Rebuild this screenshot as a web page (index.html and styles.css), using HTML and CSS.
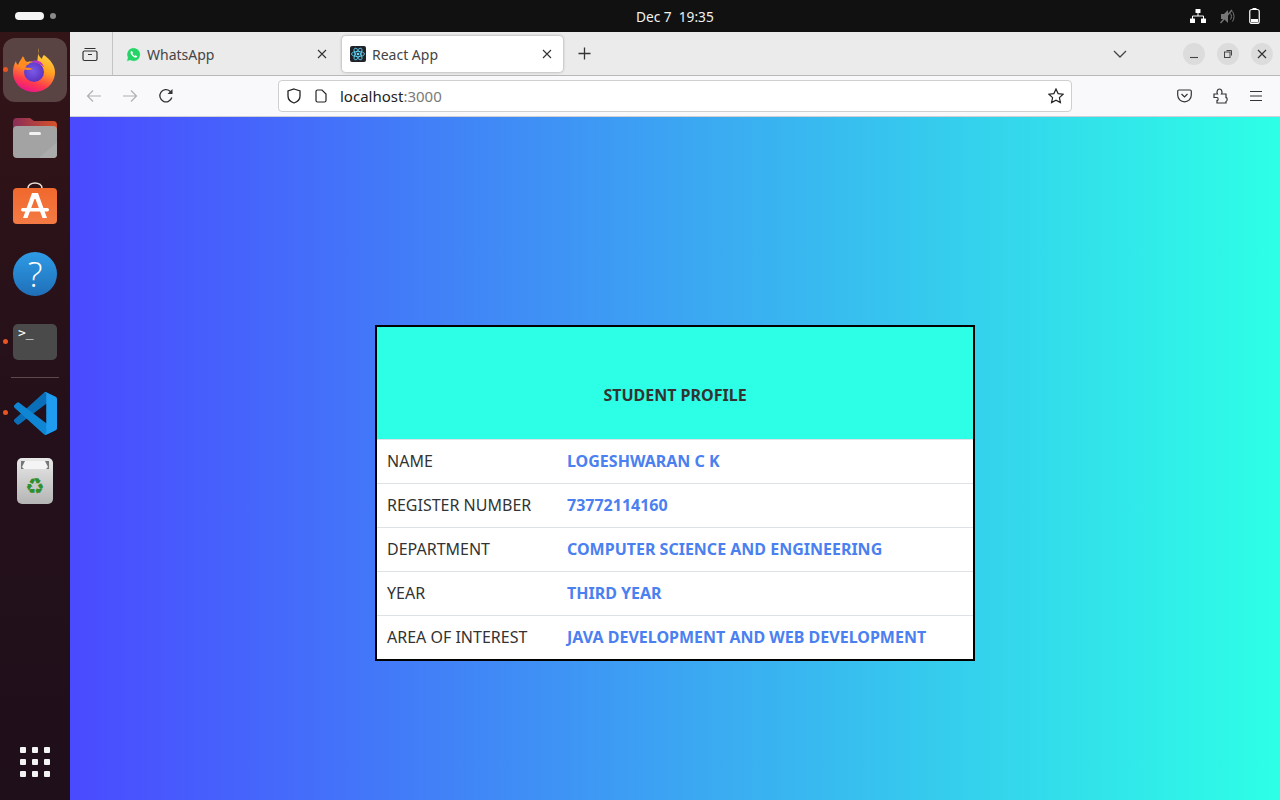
FILE: index.html
```html
<!DOCTYPE html>
<html lang="en">
<head>
    <meta charset="UTF-8">
    <meta name="viewport" content="width=device-width, initial-scale=1.0">
    <title>React App</title>
    <link rel="stylesheet" href="styles.css">
</head>
<body>
    <!-- top bar -->
    <header class="topbar">
        <div class="workspaces"><span class="ws-pill"></span><span class="ws-dot"></span></div>
        <div class="clock">Dec 7&nbsp;&nbsp;19:35</div>
        <div class="tray">
            <svg width="16" height="14" viewBox="0 0 16 14"><rect x="5.5" y="0" width="5" height="4" rx="0.5" fill="#fff"/><path d="M8 4v3M2.5 10V7h11v3" fill="none" stroke="#fff"/><rect x="0" y="9.5" width="5" height="4.5" rx="0.5" fill="#fff"/><rect x="11" y="9.5" width="5" height="4.5" rx="0.5" fill="#fff"/></svg>
            <svg width="15" height="15" viewBox="0 0 15 15"><path d="M1 5h3l4-4v13l-4-4H1z" fill="#777"/><path d="M10.5 4.5c1.2 1.6 1.2 4.400 0 6M12.500 2.500c2 2.600 2 7.400 0 10" fill="none" stroke="#777"/><path d="M0.500 14L12 1" stroke="#777" stroke-width="1.400"/></svg>
            <svg width="11" height="16" viewBox="0 0 11 16"><rect x="3.500" y="0" width="4" height="2" fill="#fff"/><rect x="0.750" y="1.500" width="9.500" height="14" rx="2" fill="none" stroke="#fff" stroke-width="1.200"/><rect x="2" y="11" width="7" height="3.500" fill="#fff"/></svg>
        </div>
    </header>

    <div class="desktop">
        <!-- dock -->
        <nav class="dock">
            <div class="dock-item dock-active">
                <span class="run-dot"></span>
                <svg width="44" height="44" viewBox="0 0 44 44">
                    <defs>
                        <linearGradient id="fx" x1="0.7" y1="0" x2="0.35" y2="1"><stop offset="0" stop-color="#ffe04a"/><stop offset="0.45" stop-color="#ffa022"/><stop offset="0.78" stop-color="#ff3a4e"/><stop offset="1" stop-color="#e8148c"/></linearGradient>
                        <radialGradient id="fxb" cx="0.45" cy="0.45" r="0.6"><stop offset="0" stop-color="#7a5be6"/><stop offset="1" stop-color="#5a2fc0"/></radialGradient>
                    </defs>
                    <path d="M26 0c-2 4-1 8 3 11 0-2 1-3 2-4 7 5 11 11 11 17 0 11-9 20-21 20C9 44 0 35 0 24c0-4 1-8 3-11 0 2 1 3 2 4 1-3 3-6 6-8 0 2 1 4 3 5 3-1 7-1 10 0 1-4 1-10 2-14z" fill="url(#fx)"/>
                    <circle cx="21" cy="24" r="10" fill="url(#fxb)"/>
                    <path d="M10 8c1 4 3 7 7 8-3 1-5 1-7 3 3 1 6 0 10 2-4 2-10 1-14-2 0-4 2-8 4-11z" fill="#ff8a1f"/>
                    <path d="M17 14c5-3 12-2 14 5-3-3-8-5-14-5z" fill="#b833c8"/>
                </svg>
            </div>
            <div class="dock-item">
                <svg width="44" height="40" viewBox="0 0 44 40">
                    <defs><linearGradient id="fold" x1="0" y1="0" x2="1" y2="0"><stop offset="0" stop-color="#8a2d58"/><stop offset="1" stop-color="#d8522a"/></linearGradient></defs>
                    <path d="M0 4a4 4 0 0 1 4-4h13l4 3h19a4 4 0 0 1 4 4v10H0z" fill="url(#fold)"/>
                    <rect y="8" width="44" height="32" rx="4" fill="#a3a3a3"/>
                    <path d="M44 24v12a4 4 0 0 1-4 4H26z" fill="#ababab"/>
                    <rect x="16" y="14" width="12" height="3" rx="1.500" fill="#f2f2f2"/>
                </svg>
            </div>
            <div class="dock-item">
                <svg width="44" height="48" viewBox="0 0 44 48">
                    <defs><linearGradient id="bag" x1="0" y1="0" x2="0" y2="1"><stop offset="0" stop-color="#f0682e"/><stop offset="1" stop-color="#f47a44"/></linearGradient></defs>
                    <path d="M15 8V6a7 5 0 0 1 14 0v2" fill="none" stroke="#eadfd2" stroke-width="1.600"/>
                    <rect y="6" width="44" height="36" rx="4" fill="url(#bag)"/>
                    <path d="M19 11h6l9 25h-4.500l-7-19h-1l-7 19H10z" fill="#fff"/>
                    <rect x="8" y="26" width="28" height="3.500" rx="1.750" fill="#fff"/>
                </svg>
            </div>
            <div class="dock-item">
                <div class="help-icon">?</div>
            </div>
            <div class="dock-item">
                <span class="run-dot"></span>
                <div class="term-icon"><span class="term-prompt">&gt;_</span></div>
            </div>
            <div class="dock-sep"></div>
            <div class="dock-item">
                <span class="run-dot"></span>
                <svg width="43" height="43" viewBox="0 0 100 100">
                    <path d="M96.461 10.796L75.857.876a6.23 6.23 0 0 0-7.107 1.207l-67.451 61.5a4.167 4.167 0 0 0 .004 6.162l5.51 5.009a4.167 4.167 0 0 0 5.32.236l81.228-61.62c2.725-2.067 6.639-.124 6.639 3.297v-.24a6.25 6.25 0 0 0-3.539-5.63z" fill="#0a6fb8"/>
                    <path d="M96.461 89.204l-20.604 9.92a6.23 6.23 0 0 1-7.107-1.207l-67.451-61.5a4.167 4.167 0 0 1 .004-6.162l5.51-5.009a4.167 4.167 0 0 1 5.32-.236l81.228 61.62c2.725 2.067 6.639.124 6.639-3.297v.24a6.25 6.25 0 0 1-3.539 5.63z" fill="#0e86d4"/>
                    <path d="M75.858 99.126a6.232 6.232 0 0 1-7.108-1.21c2.306 2.307 6.25.674 6.25-2.588V4.672c0-3.262-3.944-4.895-6.25-2.589a6.232 6.232 0 0 1 7.108-1.21l20.6 9.908A6.25 6.25 0 0 1 100 16.413v67.174a6.25 6.25 0 0 1-3.541 5.633l-20.601 9.906z" fill="#1f9cf0"/>
                </svg>
            </div>
            <div class="dock-item">
                <svg width="36" height="46" viewBox="0 0 36 46">
                    <defs><linearGradient id="bin" x1="0" y1="0" x2="0" y2="1"><stop offset="0" stop-color="#e8e8e8"/><stop offset="1" stop-color="#b4b4b4"/></linearGradient></defs>
                    <rect width="36" height="46" rx="5" fill="url(#bin)"/>
                    <path d="M4 3h28v8H4z" fill="#777"/>
                    <path d="M5 9l3-6h20l3 6-2 2H7z" fill="#f4f4f4"/>
                    <text x="18" y="36" font-size="22" text-anchor="middle" fill="#2f8f2f" font-family="DejaVu Sans">&#9851;</text>
                </svg>
            </div>
            <div class="apps-grid">
                <span></span><span></span><span></span>
                <span></span><span></span><span></span>
                <span></span><span></span><span></span>
            </div>
        </nav>

        <div class="browser">
            <!-- tab strip -->
            <div class="tabstrip">
                <div class="tab-view">
                    <svg width="16" height="16" viewBox="0 0 16 16" fill="none" stroke="#333" stroke-width="1.200"><rect x="1" y="5" width="14" height="9.500" rx="1.500"/><path d="M2.500 2.500h11M6 8.500h4"/></svg>
                </div>
                <div class="tab">
                    <svg width="15" height="15" viewBox="0 0 14 14"><path d="M0.500 13.500l1-3.600A6.300 6.300 0 1 1 4 12.500z" fill="#25d366" stroke="#fff" stroke-width="0.500"/><path d="M4.800 3.800c-.8.800-.8 2 .3 3.400 1 1.400 2.500 2.700 3.900 2.700.8 0 1.300-.5 1.500-1.200l-1.700-1-.7.700c-.8-.3-1.700-1.200-2.100-2l.6-.7-.9-1.800z" fill="#fff"/></svg>
                    <span class="tab-title">WhatsApp</span>
                    <svg class="tab-close" width="10" height="10" viewBox="0 0 10 10"><path d="M1 1l8 8M9 1l-8 8" stroke="#333" stroke-width="1.100"/></svg>
                </div>
                <div class="tab tab-active">
                    <svg width="16" height="16" viewBox="0 0 16 16"><rect width="16" height="16" rx="2" fill="#20232a"/><g fill="none" stroke="#61dafb" stroke-width="0.800"><ellipse cx="8" cy="8" rx="6.500" ry="2.600"/><ellipse cx="8" cy="8" rx="6.500" ry="2.600" transform="rotate(60 8 8)"/><ellipse cx="8" cy="8" rx="6.500" ry="2.600" transform="rotate(120 8 8)"/></g><circle cx="8" cy="8" r="1.300" fill="#61dafb"/></svg>
                    <span class="tab-title">React App</span>
                    <svg class="tab-close" width="10" height="10" viewBox="0 0 10 10"><path d="M1 1l8 8M9 1l-8 8" stroke="#333" stroke-width="1.100"/></svg>
                </div>
                <div class="tab-new">
                    <svg width="13" height="13" viewBox="0 0 13 13"><path d="M6.500 0.500v12M0.500 6.500h12" stroke="#333" stroke-width="1.300"/></svg>
                </div>
                <div class="tab-list">
                    <svg width="14" height="8" viewBox="0 0 14 8"><path d="M1 1l6 6 6-6" fill="none" stroke="#444" stroke-width="1.300"/></svg>
                </div>
                <div class="win-btns">
                    <div class="win-btn"><svg width="10" height="10" viewBox="0 0 10 10"><path d="M1 8.500h8" stroke="#444" stroke-width="1.100"/></svg></div>
                    <div class="win-btn"><svg width="10" height="10" viewBox="0 0 10 10" fill="none" stroke="#444"><rect x="1.500" y="3" width="5.500" height="5.500"/><path d="M3.500 1.500h5v5"/></svg></div>
                    <div class="win-btn"><svg width="10" height="10" viewBox="0 0 10 10"><path d="M1 1l8 8M9 1l-8 8" stroke="#333" stroke-width="1.200"/></svg></div>
                </div>
            </div>

            <!-- nav bar -->
            <div class="navbar">
                <div class="nav-left">
                    <svg width="16" height="14" viewBox="0 0 16 14" fill="none" stroke="#b0b0b0" stroke-width="1.200"><path d="M15 7H1.500M7 1.500L1.500 7 7 12.500"/></svg>
                    <svg width="16" height="14" viewBox="0 0 16 14" fill="none" stroke="#b0b0b0" stroke-width="1.200"><path d="M1 7h13.500M9 1.500L14.500 7 9 12.500"/></svg>
                    <svg width="16" height="16" viewBox="0 0 16 16" fill="none" stroke="#333" stroke-width="1.300"><path d="M13.800 9.500A6.100 6.100 0 1 1 12 3.200L14 5"/><path d="M14.500 1v5h-5" fill="#333" stroke="none"/></svg>
                </div>
                <div class="urlbar">
                    <svg width="14" height="16" viewBox="0 0 14 16" fill="none" stroke="#222" stroke-width="1.300"><path d="M7 1l6 2v5c0 3.500-3 6-6 7-3-1-6-3.500-6-7V3z"/></svg>
                    <svg class="url-page" width="12" height="14" viewBox="0 0 12 14" fill="none" stroke="#222" stroke-width="1.200"><path d="M1 2.500A1.500 1.500 0 0 1 2.500 1H7l4 4v6.500a1.500 1.500 0 0 1-1.500 1.500h-7A1.500 1.500 0 0 1 1 11.500z"/></svg>
                    <span class="url-text">localhost<span class="url-port">:3000</span></span>
                    <svg class="url-star" width="16" height="16" viewBox="0 0 16 16" fill="none" stroke="#222" stroke-width="1.200"><path d="M8 1l2.100 4.600 5 .6-3.700 3.400 1 4.900L8 12.100l-4.400 2.400 1-4.900L.9 6.200l5-.6z"/></svg>
                </div>
                <div class="nav-right">
                    <svg width="15" height="14" viewBox="0 0 15 14" fill="none" stroke="#333" stroke-width="1.200"><path d="M2 1h11a1.300 1.300 0 0 1 1.300 1.300V6a6.800 6.800 0 0 1-13.600 0V2.300A1.300 1.300 0 0 1 2 1z"/><path d="M4.500 5l3 3 3-3"/></svg>
                    <svg width="15" height="16" viewBox="0 0 15 16" fill="none" stroke="#333" stroke-width="1.200"><path d="M1 6h3.500c-1-1.500-.5-5 2-5s3 3.500 2 5H13v3.500c1.500-.5 1.500 4 0 4V15H4v-2.500c1.500.5 1.500-3 0-3H1z"/></svg>
                    <svg width="14" height="12" viewBox="0 0 14 12" stroke="#333" stroke-width="1.200"><path d="M1 1.500h12M1 6h12M1 10.500h12"/></svg>
                </div>
            </div>

            <!-- page -->
            <main class="page">
                <table class="profile">
                    <colgroup>
                        <col class="col-label">
                        <col>
                    </colgroup>
                    <thead>
                        <tr><th colspan="2">STUDENT PROFILE</th></tr>
                    </thead>
                    <tbody>
                        <tr><td>NAME</td><td class="value">LOGESHWARAN C K</td></tr>
                        <tr><td>REGISTER NUMBER</td><td class="value">73772114160</td></tr>
                        <tr><td>DEPARTMENT</td><td class="value">COMPUTER SCIENCE AND ENGINEERING</td></tr>
                        <tr><td>YEAR</td><td class="value">THIRD YEAR</td></tr>
                        <tr><td>AREA OF INTEREST</td><td class="value">JAVA DEVELOPMENT AND WEB DEVELOPMENT</td></tr>
                    </tbody>
                </table>
            </main>
        </div>
    </div>
</body>
</html>
```

FILE: styles.css
```css
*{
    box-sizing: border-box;
}
html, body{
    margin: 0;
    height: 100%;
    overflow: hidden;
}
body{
    display: flex;
    flex-direction: column;
    height: 800px;
    font-family: "Noto Sans", sans-serif;
    background: #111;
}
svg{
    display: block;
    flex: none;
}

/* top bar */
.topbar{
    height: 32px;
    flex: none;
    background: #111111;
    color: #f2f2f2;
    display: grid;
    grid-template-columns: 621px auto 1fr;
    align-items: center;
    padding: 0 20px 0 15px;
    font-size: 13.7px;
}
.workspaces{
    display: flex;
    align-items: center;
    gap: 6px;
}
.ws-pill{
    width: 29px;
    height: 8px;
    border-radius: 4px;
    background: #f5f5f5;
}
.ws-dot{
    width: 6px;
    height: 6px;
    border-radius: 50%;
    background: #8a8a8a;
}
.tray{
    display: flex;
    justify-content: flex-end;
    align-items: center;
    gap: 14px;
}

.desktop{
    flex: 1;
    display: flex;
    min-height: 0;
}

/* dock */
.dock{
    width: 70px;
    flex: none;
    background: linear-gradient(#331417, #24101a 50%, #1f0f1a);
    display: flex;
    flex-direction: column;
    align-items: center;
    padding-top: 6px;
}
.dock-item{
    position: relative;
    width: 64px;
    height: 64px;
    margin-bottom: 4px;
    display: flex;
    align-items: center;
    justify-content: center;
    flex: none;
}
.dock-active{
    background: #5a4443;
    border-radius: 12px;
}
.run-dot{
    position: absolute;
    left: 0;
    top: 29px;
    width: 5px;
    height: 5px;
    border-radius: 50%;
    background: #e95420;
}
.help-icon{
    width: 44px;
    height: 44px;
    border-radius: 50%;
    background: linear-gradient(#2f9be6, #1f6fb8);
    color: #fff;
    font-family: "Open Sans", sans-serif;
    font-weight: 300;
    font-size: 35px;
    line-height: 44px;
    text-align: center;
}
.term-icon{
    width: 44px;
    height: 36px;
    border-radius: 5px;
    background: #4a4a4a;
    padding: 0 0 0 5px;
}
.term-prompt{
    display: block;
    color: #fff;
    font-size: 13px;
    line-height: 17px;
    font-family: "DejaVu Sans Mono", monospace;
}
.dock-sep{
    width: 48px;
    height: 1px;
    background: #5c4a4c;
    margin: -1px 0 3px;
    flex: none;
}
.apps-grid{
    margin-top: auto;
    margin-bottom: 23px;
    display: grid;
    grid-template-columns: repeat(3, 6px);
    gap: 6px;
}
.apps-grid span{
    width: 6px;
    height: 6px;
    border-radius: 1px;
    background: #f4f4f4;
}

/* browser */
.browser{
    flex: 1;
    min-width: 0;
    display: flex;
    flex-direction: column;
}
.tabstrip{
    height: 44px;
    flex: none;
    background: #ebebeb;
    border-bottom: 1px solid #b8b8b8;
    display: flex;
    align-items: center;
    color: #333;
}
.tab-view{
    width: 43px;
    height: 100%;
    padding-right: 2px;
    display: flex;
    align-items: center;
    justify-content: center;
    border-right: 1px solid #c4c4c4;
}
.tab{
    width: 224px;
    height: 36px;
    margin-left: 2px;
    padding: 1px 12px 0 11px;
    display: flex;
    align-items: center;
    gap: 6px;
    font-size: 14px;
    border-radius: 4px;
}
.tab-title{
    flex: 1;
    color: #454545;
}
.tab-active{
    width: 221px;
    background: #fff;
    box-shadow: 0 0 3px rgba(0, 0, 0, 0.35);
    margin-left: 3px;
    padding: 1px 11px 0 8px;
}
.tab-new{
    margin-left: 15px;
}
.tab-list{
    margin-left: auto;
    margin-right: 56px;
}
.win-btns{
    display: flex;
    gap: 12px;
    margin-right: 7px;
}
.win-btn{
    width: 22px;
    height: 22px;
    border-radius: 50%;
    background: #dcdcdc;
    display: flex;
    align-items: center;
    justify-content: center;
}

.navbar{
    height: 41px;
    flex: none;
    background: #f9f9fb;
    border-bottom: 1px solid #cfcfd8;
    display: flex;
    align-items: center;
}
.nav-left{
    width: 208px;
    padding-left: 16px;
    display: flex;
    align-items: center;
    gap: 20px;
}
.urlbar{
    width: 794px;
    height: 32px;
    background: #fff;
    border: 1px solid #cfcfcf;
    border-radius: 4px;
    display: flex;
    align-items: center;
    padding: 0 7px 0 8px;
    font-size: 15px;
    color: #222;
}
.url-page{
    margin-left: 14px;
}
.url-text{
    margin-left: 13px;
    flex: 1;
}
.url-port{
    color: #7a7a7a;
}
.nav-right{
    display: flex;
    align-items: center;
    gap: 21px;
    margin-left: 105px;
}

/* student card */
.page{
    flex: 1;
    background: linear-gradient(90deg, #4a4aff, #2dffe6);
    display: flex;
    align-items: center;
    justify-content: center;
    padding-top: 68px;
}
.profile{
    width: 600px;
    height: 336px;
    border: 2px solid #000;
    border-collapse: separate;
    border-spacing: 0;
    background: #fff;
    color: #333;
    font-size: 16px;
    table-layout: fixed;
}
.col-label{
    width: 180px;
}
.profile th{
    height: 113px;
    background: #2dffe6;
    vertical-align: bottom;
    padding: 0 10px 33px;
    font-weight: 700;
    text-align: center;
    border-bottom: 1px solid #dee2e6;
}
.profile td{
    height: 44px;
    padding: 0 10px;
    border-bottom: 1px solid #dee2e6;
}
.profile tr:last-child td{
    height: 43px;
    border-bottom: 0;
}
.value{
    color: #4a80f0;
    font-weight: 700;
}
```
